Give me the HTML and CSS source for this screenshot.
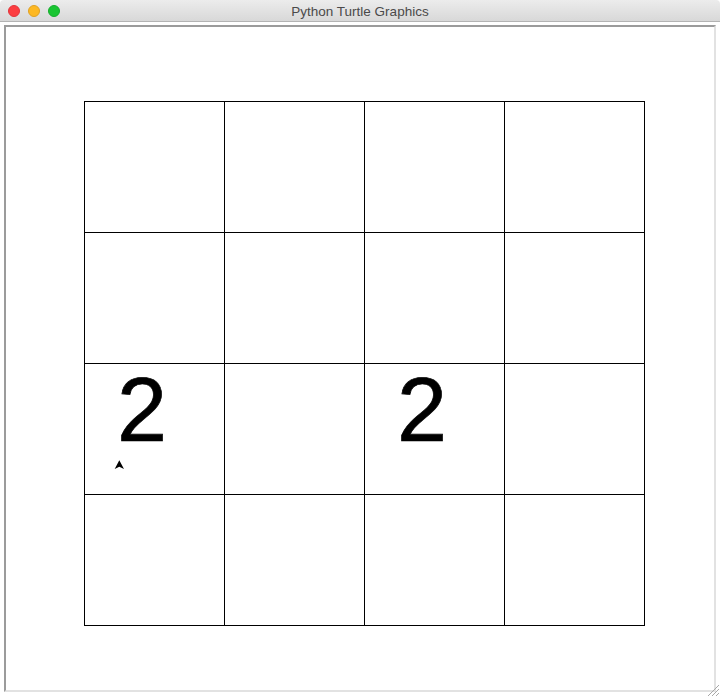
FILE: index.html
```html
<!DOCTYPE html>
<html>
<head>
<meta charset="utf-8">
<link rel="stylesheet" href="styles.css">
</head>
<body>
<div class="window">
  <div class="titlebar">
    <div class="lights">
      <span class="light red"></span>
      <span class="light yellow"></span>
      <span class="light green"></span>
    </div>
    <div class="title">Python Turtle Graphics</div>
  </div>
  <div class="content">
    <div class="canvas">
      <div class="board">
        <div class="cell"></div><div class="cell"></div><div class="cell"></div><div class="cell"></div>
        <div class="cell"></div><div class="cell"></div><div class="cell"></div><div class="cell"></div>
        <div class="cell"><span class="num">2</span>
          <svg class="turtle" width="12" height="11" viewBox="0 0 12 11"><polygon points="6.3,1.3 1.7,10 6.3,7.7 11,10" fill="#000"/></svg>
        </div>
        <div class="cell"></div>
        <div class="cell"><span class="num">2</span></div>
        <div class="cell"></div>
        <div class="cell"></div><div class="cell"></div><div class="cell"></div><div class="cell"></div>
      </div>
    </div>
    <svg class="grip" width="12" height="12" viewBox="0 0 12 12">
      <line x1="12" y1="1" x2="1" y2="12" stroke="#a8a8a8" stroke-width="1"/>
      <line x1="12" y1="5" x2="5" y2="12" stroke="#a8a8a8" stroke-width="1"/>
      <line x1="12" y1="9" x2="9" y2="12" stroke="#a8a8a8" stroke-width="1"/>
    </svg>
  </div>
</div>
</body>
</html>
```
FILE: styles.css
```css
html, body {
  margin: 0;
  padding: 0;
  background: #ffffff;
}
.window {
  width: 720px;
  height: 697px;
  display: flex;
  flex-direction: column;
  overflow: hidden;
}
.titlebar {
  height: 21px;
  flex: 0 0 21px;
  background: linear-gradient(#ececec, #d8d8d8);
  border-bottom: 1px solid #b3b3b3;
  border-radius: 4px 4px 0 0;
  position: relative;
  display: flex;
  align-items: center;
  justify-content: center;
}
.lights {
  position: absolute;
  left: 8px;
  top: 5px;
  display: flex;
  gap: 8px;
}
.light {
  width: 12px;
  height: 12px;
  border-radius: 50%;
  box-sizing: border-box;
}
.red { background: #fc3d40; border: 1px solid #e2343a; }
.yellow { background: #fdb822; border: 1px solid #dfa122; }
.green { background: #19c532; border: 1px solid #14ad2c; }
.title {
  font-family: "Liberation Sans", Arial, sans-serif;
  font-size: 13.5px;
  color: #4a4a4a;
  line-height: 21px;
  padding-top: 1px;
}
.content {
  flex: 1;
  position: relative;
  padding: 3px 4px 4px 4px;
  background: #ffffff;
}
.canvas {
  height: 667px;
  width: 712px;
  box-sizing: border-box;
  border-top: 2px solid #9b9b9b;
  border-left: 2px solid #9b9b9b;
  border-right: 2px solid #e2e2e2;
  border-bottom: 2px solid #e2e2e2;
  background: #fff;
  padding: 74px 0 0 78px;
}
.board {
  display: grid;
  grid-template-columns: repeat(4, 140px);
  grid-template-rows: repeat(4, 131px);
  width: 561px;
  box-sizing: border-box;
  border-top: 1px solid #000;
  border-left: 1px solid #000;
}
.cell {
  box-sizing: border-box;
  border-right: 1px solid #000;
  border-bottom: 1px solid #000;
  position: relative;
}
.num {
  display: block;
  font-family: "Liberation Sans", Arial, sans-serif;
  font-size: 90px;
  line-height: 90px;
  color: #000;
  -webkit-text-stroke: 0.7px #000;
  padding: 1px 0 0 32px;
}
.turtle {
  position: absolute;
  left: 28px;
  top: 95px;
}
.grip {
  position: absolute;
  right: 1px;
  bottom: 1px;
}
```
